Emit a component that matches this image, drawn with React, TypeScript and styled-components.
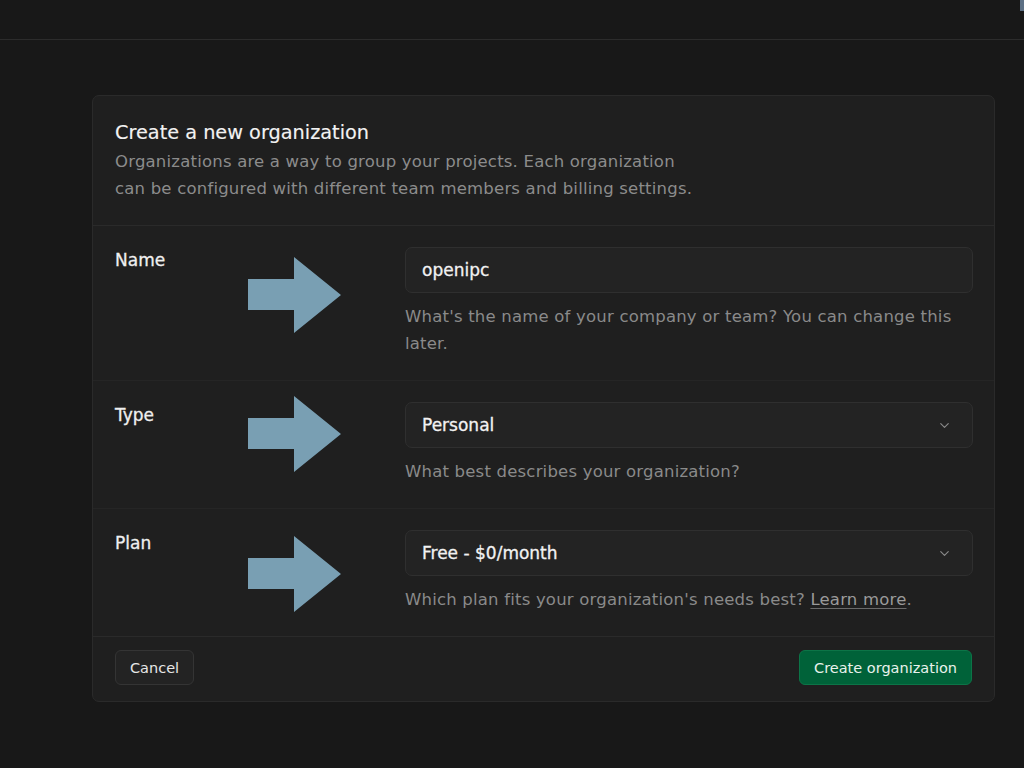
import styled, { createGlobalStyle } from 'styled-components';
import { ChevronDown } from 'lucide-react';

const GlobalStyle = createGlobalStyle`
  html, body {
    margin: 0;
    background: #181818;
  }
  body {
    font-family: "DejaVu Sans", Inter, "Noto Sans", sans-serif;
    color: #ededed;
    -webkit-font-smoothing: antialiased;
  }
`;

const TopBar = styled.header`
  height: 39px;
  border-bottom: 1px solid #2c2c2c;
  background: #181818;
  position: relative;
`;

const CornerMark = styled.span`
  position: absolute;
  top: 0;
  right: 0;
  width: 4px;
  height: 11px;
  background: #5c6f84;
`;

const Main = styled.main`
  padding: 55px 0 66px 92px;
`;

const Card = styled.section`
  width: 903px;
  box-sizing: border-box;
  background: #1f1f1f;
  border: 1px solid #2a2a2a;
  border-radius: 7px;
`;

const Header = styled.div`
  padding: 22px 22px 23px;
  border-bottom: 1px solid #2a2a2a;
`;

const Title = styled.h1`
  margin: 1px 0 1px;
  font-size: 19.3px;
  line-height: 28px;
  font-weight: 400;
  color: #f2f2f2;
  -webkit-text-stroke: 0.15px #f2f2f2;
`;

const Description = styled.p`
  margin: 0;
  font-size: 16.5px;
  letter-spacing: 0.2px;
  line-height: 27px;
  color: #8c8c8c;
`;

const Row = styled.div<{ $last?: boolean }>`
  position: relative;
  display: grid;
  grid-template-columns: 290px 568px;
  padding: 21px 22px 23px;
  border-bottom: 1px solid ${p => (p.$last ? '#2a2a2a' : '#252525')};
`;

const Label = styled.label`
  font-size: 17px;
  line-height: 27px;
  color: #efefef;
  -webkit-text-stroke: 0.3px #efefef;
`;

const Field = styled.div`
  display: flex;
  flex-direction: column;
  gap: 10px;
`;

const Box = styled.div`
  height: 46px;
  box-sizing: border-box;
  display: flex;
  align-items: center;
  justify-content: space-between;
  padding: 0 20px 0 16px;
  background: #232323;
  border: 1px solid #2f2f2f;
  border-radius: 7px;
  font-size: 17px;
  color: #f2f2f2;
  -webkit-text-stroke: 0.3px #f2f2f2;
`;

const Helper = styled.p`
  margin: 0;
  font-size: 16.5px;
  letter-spacing: 0.2px;
  line-height: 27px;
  color: #8a8a8a;
`;

const Link = styled.a`
  color: #9a9a9a;
  text-decoration: underline;
  text-underline-offset: 3px;
  text-decoration-color: #6a6a6a;
`;

const ArrowWrap = styled.div<{ $top: number }>`
  position: absolute;
  left: 155px;
  top: ${p => p.$top}px;
  width: 93px;
  height: 76px;
`;

const Footer = styled.div`
  display: flex;
  justify-content: space-between;
  align-items: center;
  padding: 13px 22px 16px;
`;

const Button = styled.button<{ $primary?: boolean }>`
  height: 35px;
  padding: 0 14px;
  border-radius: 6px;
  font-family: inherit;
  font-size: 14.5px;
  color: ${p => (p.$primary ? '#e9f2ec' : '#e6e6e6')};
  background: ${p => (p.$primary ? '#006239' : '#232323')};
  border: 1px solid ${p => (p.$primary ? '#0c7447' : '#343434')};
`;

const Arrow = ({ top }: { top: number }) => (
  <ArrowWrap $top={top}>
    <svg width="93" height="76" viewBox="0 0 93 76">
      <polygon points="0,22 46,22 46,0 93,38 46,76 46,53 0,53" fill="#799fb3" />
    </svg>
  </ArrowWrap>
);

export default function App() {
  return (
    <>
      <GlobalStyle />
      <TopBar>
        <CornerMark />
      </TopBar>
      <Main>
        <Card>
          <Header>
            <Title>Create a new organization</Title>
            <Description>
              Organizations are a way to group your projects. Each organization
              <br />
              can be configured with different team members and billing settings.
            </Description>
          </Header>

          <Row>
            <Label>Name</Label>
            <Field>
              <Box>openipc</Box>
              <Helper>What's the name of your company or team? You can change this later.</Helper>
            </Field>
            <Arrow top={31} />
          </Row>

          <Row>
            <Label>Type</Label>
            <Field>
              <Box>
                Personal
                <ChevronDown size={15} color="#8a8a8a" strokeWidth={1.8} />
              </Box>
              <Helper>What best describes your organization?</Helper>
            </Field>
            <Arrow top={15} />
          </Row>

          <Row $last>
            <Label>Plan</Label>
            <Field>
              <Box>
                Free - $0/month
                <ChevronDown size={15} color="#8a8a8a" strokeWidth={1.8} />
              </Box>
              <Helper>
                Which plan fits your organization's needs best? <Link>Learn more</Link>.
              </Helper>
            </Field>
            <Arrow top={27} />
          </Row>

          <Footer>
            <Button>Cancel</Button>
            <Button $primary>Create organization</Button>
          </Footer>
        </Card>
      </Main>
    </>
  );
}
